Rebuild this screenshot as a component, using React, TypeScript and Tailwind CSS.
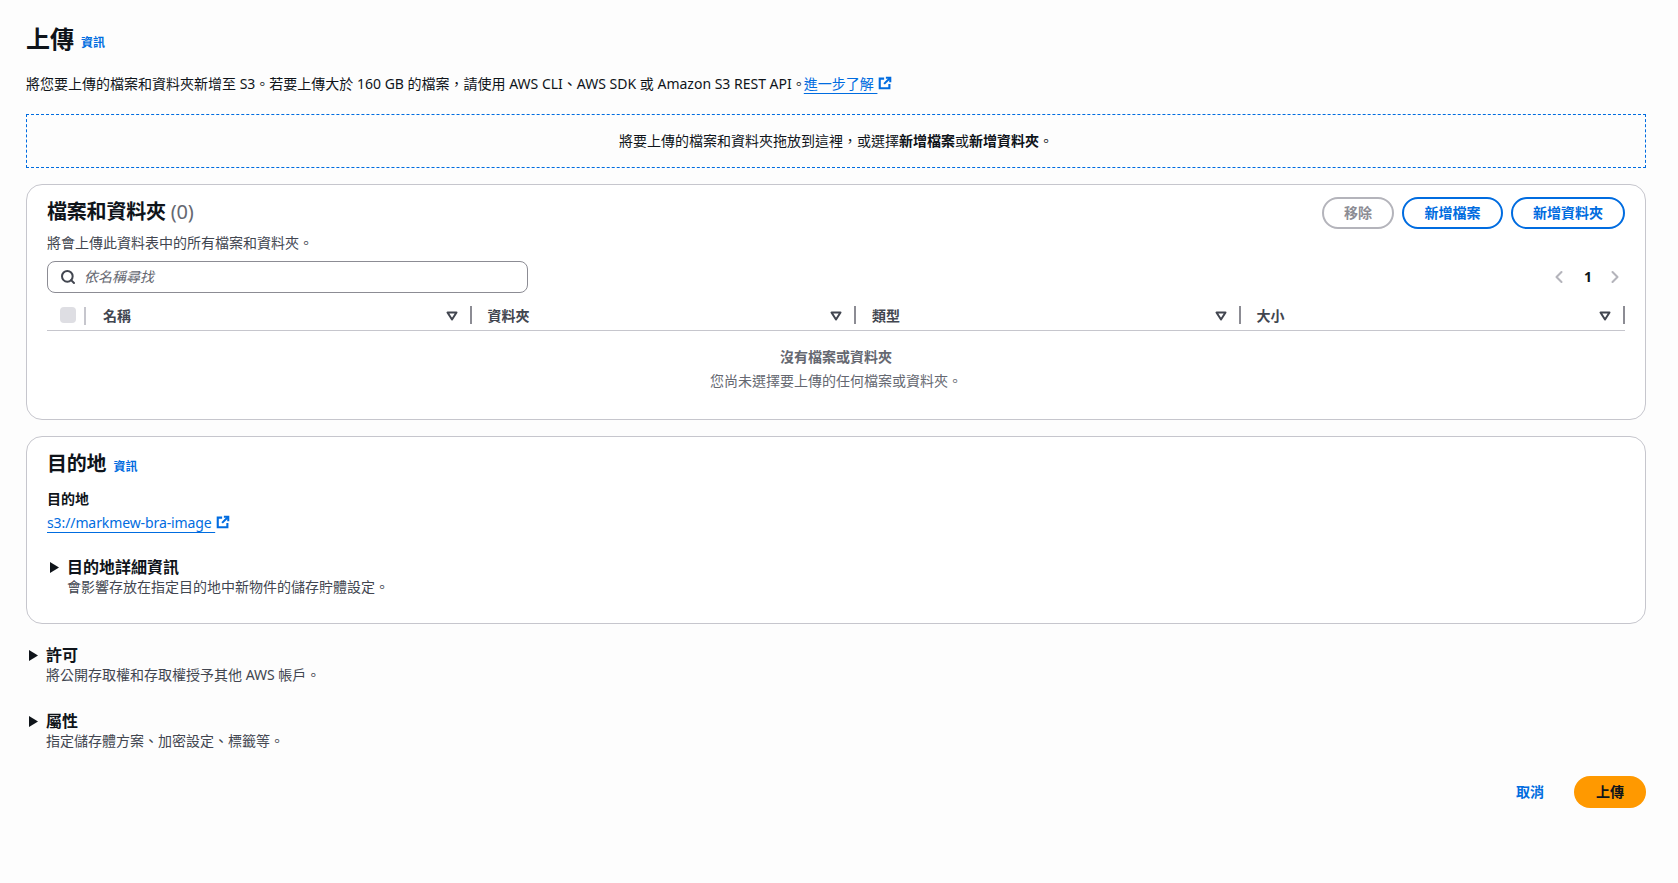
import { Search, ChevronLeft, ChevronRight } from "lucide-react";

const font = "font-['Noto_Sans','Noto_Sans_CJK_TC',sans-serif]";

const ExternalIcon = () => (
  <svg viewBox="0 0 16 16" className="w-[14px] h-[14px] ml-px inline-block align-[-1px]" fill="none" stroke="#006ce0" strokeWidth="2.4">
    <path d="M7 3H2v11h11V9" />
    <path d="M9 2h5v5" />
    <path d="M14 2 7 9" />
  </svg>
);

const FilterIcon = () => (
  <svg viewBox="0 0 12 12" className="w-3 h-3 shrink-0" fill="none" stroke="#424650" strokeWidth="2">
    <path d="M1.5 2.5h9L6 9.5z" strokeLinejoin="round" />
  </svg>
);

const Info = () => <span className="text-xs font-bold text-[#006ce0]">資訊</span>;

const columns = ["名稱", "資料夾", "類型", "大小"];

const Expand = ({ title, desc, indent }: { title: string; desc: string; indent: string }) => (
  <div className={`flex ${indent}`}>
    <svg viewBox="0 0 10 12" className="w-[9px] h-[11px] mt-[6px] shrink-0" fill="#0f141a">
      <path d="M0 0l10 6-10 6z" />
    </svg>
    <div className="ml-[8px]">
      <div className="text-base font-bold leading-[22px] text-[#0f141a]">{title}</div>
      <div className="text-sm leading-[18px] text-[#424650]">{desc}</div>
    </div>
  </div>
);

export default function App() {
  return (
    <div className={`${font} min-h-[883px] bg-[#fdfdfd] pl-[26px] pr-[32px] pt-[22px] text-sm text-[#0f141a]`}>
      {/* Header */}
      <div className="flex items-end h-[34px]">
        <h1 className="text-2xl font-bold leading-[34px]">上傳</h1>
        <span className="ml-[7px] mb-[3px] leading-[22px]"><Info /></span>
      </div>
      <p className="mt-[18px] leading-5">
        將您要上傳的檔案和資料夾新增至 S3。若要上傳大於 160 GB 的檔案，請使用 AWS CLI、AWS SDK 或 Amazon S3 REST API。
        <span className="-ml-[2px] text-[#006ce0] underline underline-offset-4">進一步了解 </span>
        <ExternalIcon />
      </p>

      {/* Drop zone */}
      <div className="mt-5 h-[54px] border border-dashed border-[#006ce0] flex items-center justify-center">
        <span>將要上傳的檔案和資料夾拖放到這裡，或選擇<b>新增檔案</b>或<b>新增資料夾</b>。</span>
      </div>

      {/* Files card */}
      <div className="mt-4 h-[236px] bg-white border border-[#c6c6cd] rounded-2xl px-5 pt-3">
        <div className="flex justify-between">
          <div className="pt-px">
            <div className="text-xl font-bold leading-7 tracking-[-0.2px]">
              檔案和資料夾 <span className="font-normal text-[#656871]">(0)</span>
            </div>
            <div className="mt-[8px] leading-[18px] text-[#424650]">將會上傳此資料表中的所有檔案和資料夾。</div>
          </div>
          <div className="flex gap-2">
            <button className="h-8 w-[72px] rounded-full border-2 border-[#b4b4bb] bg-white font-bold text-[#8c8c94]">移除</button>
            <button className="h-8 w-[101px] rounded-full border-2 border-[#006ce0] bg-white font-bold text-[#006ce0]">新增檔案</button>
            <button className="h-8 w-[114px] rounded-full border-2 border-[#006ce0] bg-white font-bold text-[#006ce0]">新增資料夾</button>
          </div>
        </div>

        <div className="mt-[9px] flex items-center justify-between">
          <div className="w-[481px] h-8 border border-[#8c8c94] rounded-lg flex items-center px-3">
            <Search className="w-4 h-4 text-[#424650]" strokeWidth={3} />
            <span className="ml-2 italic text-[#656871]">依名稱尋找</span>
          </div>
          <div className="flex items-center text-[#b4b4bb]">
            <ChevronLeft className="w-5 h-5" strokeWidth={2.5} />
            <span className="ml-[15px] mr-[13px] font-bold text-[#0f141a]">1</span>
            <ChevronRight className="w-5 h-5" strokeWidth={2.5} />
          </div>
        </div>

        {/* Table header */}
        <div className="mt-[13px] h-[25px] flex border-b border-[#c6c6cd]">
          <div className="w-[40px] flex items-start pl-[13px] pt-[1px]">
            <div className="w-4 h-4 rounded-[4px] bg-[#dedee3] shrink-0" />
            <div className="ml-[8px] w-0.5 h-[18px] bg-[#c6c6cd] shrink-0" />
          </div>
          {columns.map((c) => (
            <div key={c} className="flex-1 flex items-start pl-4 font-bold text-[#424650] leading-5">
              <span>{c}</span>
              <span className="ml-auto mt-[4px]"><FilterIcon /></span>
              <div className="ml-[12px] w-0.5 h-[18px] bg-[#8c8c94]" />
            </div>
          ))}
        </div>

        <div className="mt-[16px] text-center text-[#656871]">
          <div className="font-bold leading-5">沒有檔案或資料夾</div>
          <div className="mt-[4px] leading-5">您尚未選擇要上傳的任何檔案或資料夾。</div>
        </div>
      </div>

      {/* Destination card */}
      <div className="mt-4 h-[188px] bg-white border border-[#c6c6cd] rounded-2xl px-5 pt-[13px]">
        <div className="flex items-end">
          <span className="text-xl font-bold leading-7 tracking-[-0.2px]">目的地</span>
          <span className="ml-[7px] mb-[1px] leading-[22px]"><Info /></span>
        </div>
        <div className="mt-[11px] font-bold leading-5">目的地</div>
        <div className="mt-1 leading-5">
          <span className="tracking-[-0.1px] text-[#006ce0] underline underline-offset-4">s3://markmew-bra-image </span>
          <ExternalIcon />
        </div>
        <Expand indent="mt-[23px] ml-[3px]" title="目的地詳細資訊" desc="會影響存放在指定目的地中新物件的儲存貯體設定。" />
      </div>

      <Expand indent="mt-[20px] ml-[3px]" title="許可" desc="將公開存取權和存取權授予其他 AWS 帳戶。" />
      <Expand indent="mt-[26px] ml-[3px]" title="屬性" desc="指定儲存體方案、加密設定、標籤等。" />

      {/* Actions */}
      <div className="mt-[26px] flex justify-end items-center">
        <span className="font-bold text-[#006ce0]">取消</span>
        <button className="ml-[30px] h-8 w-[72px] rounded-full bg-[#ff9900] font-bold text-[#0f141a]">上傳</button>
      </div>
    </div>
  );
}
